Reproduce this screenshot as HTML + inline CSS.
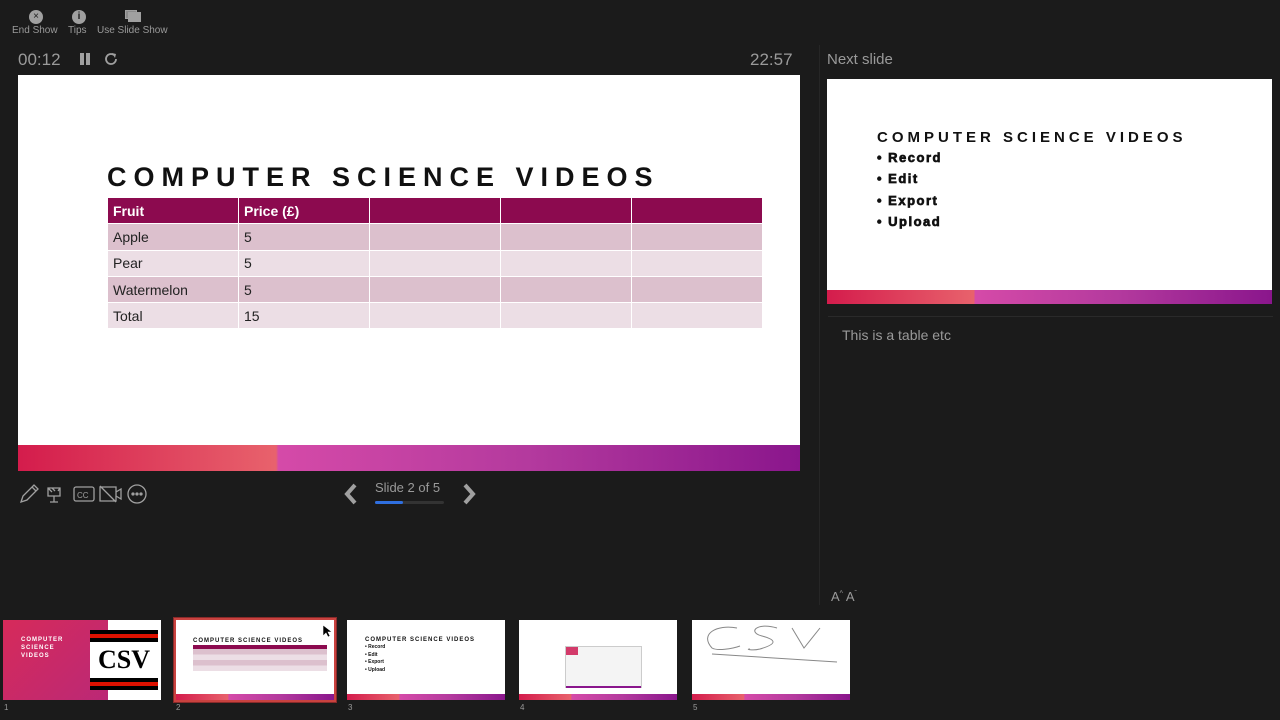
<!DOCTYPE html>
<html><head><meta charset="utf-8"><style>
*{margin:0;padding:0;box-sizing:border-box}
body{width:1280px;height:720px;background:#1b1b1b;font-family:"Liberation Sans",sans-serif;position:relative;overflow:hidden;color:#9a9a9a}
.a{position:absolute}
.band{background:linear-gradient(90deg,#d41c4c 0%,#e8626c 33%,#d54aa8 33.3%,#b43a9e 65%,#8a168c 100%)}
.tl{font-size:10px;color:#9a9a9a;text-align:center}
table{border-collapse:collapse}
td{width:131px;height:26.3px;border:1px solid #fff;font-size:14px;color:#222;padding-left:5px}
.h td{background:#8c0a4f;color:#fff;font-weight:bold}
.o td{background:#dcc0cd}.e td{background:#ecdee5}
.th{position:absolute;top:620px;height:80px;width:158px;background:#fff;overflow:hidden}
.th .b{position:absolute;left:0;right:0;bottom:0;height:6px}
.n{position:absolute;top:703px;font-size:8px;color:#999}
</style></head><body>
<div class="a" style="left:29px;top:10px;width:14px;height:14px;border-radius:50%;background:#a0a0a0;color:#1b1b1b;font-size:10px;text-align:center;line-height:14px">×</div>
<div class="a tl" style="left:12px;top:25px">End Show</div>
<div class="a" style="left:72px;top:10px;width:14px;height:14px;border-radius:50%;background:#a0a0a0;color:#1b1b1b;font-size:10px;font-weight:bold;text-align:center;line-height:14px">i</div>
<div class="a tl" style="left:68px;top:25px">Tips</div>
<div class="a" style="left:125px;top:10px;width:12px;height:9px;border:1px solid #a0a0a0;background:#8a8a8a"></div>
<div class="a" style="left:128px;top:12px;width:13px;height:10px;background:#a0a0a0"></div>
<div class="a tl" style="left:97px;top:25px">Use Slide Show</div>
<div class="a" style="left:18px;top:50px;font-size:17px;color:#9a9a9a">00:12</div>
<div class="a" style="left:80px;top:53px;width:4px;height:12px;background:#a0a0a0"></div>
<div class="a" style="left:86px;top:53px;width:4px;height:12px;background:#a0a0a0"></div>
<svg class="a" style="left:103px;top:51px" width="16" height="16" viewBox="0 0 16 16"><path d="M13 8a5 5 0 1 1-2-4" fill="none" stroke="#a0a0a0" stroke-width="1.8"/><path d="M9 2l4 1-1 4z" fill="#a0a0a0"/></svg>
<div class="a" style="left:750px;top:50px;font-size:17px;color:#9a9a9a">22:57</div>
<div class="a" style="left:18px;top:75px;width:782px;height:396px;background:#fff">
<div class="a" style="left:89px;top:87px;font-size:27px;font-weight:bold;letter-spacing:7px;color:#111">COMPUTER SCIENCE VIDEOS</div>
<table class="a" style="left:89px;top:122px">
<tr class="h"><td>Fruit</td><td>Price (£)</td><td></td><td></td><td></td></tr>
<tr class="o"><td>Apple</td><td>5</td><td></td><td></td><td></td></tr>
<tr class="e"><td>Pear</td><td>5</td><td></td><td></td><td></td></tr>
<tr class="o"><td>Watermelon</td><td>5</td><td></td><td></td><td></td></tr>
<tr class="e"><td>Total</td><td>15</td><td></td><td></td><td></td></tr>
</table>
<div class="a band" style="left:0;bottom:0;width:782px;height:26px"></div>
</div>
<svg class="a" style="left:18px;top:482px" width="135" height="24" viewBox="0 0 135 24" fill="none" stroke="#a0a0a0" stroke-width="1.3">
<path d="M3 20l2-6 11-11 4 4-11 11z M14 5l4 4"/>
<path d="M30 6h12v8h-12z M30 6l4 4 M36 14v6 M32 20h8 M34 6l3 3 M40 9l2-3"/>
<rect x="56" y="5" width="20" height="14" rx="2"/><text x="59" y="16" font-size="8" fill="#a0a0a0" stroke="none" font-family="Liberation Sans">CC</text>
<path d="M82 5h16v14h-16z M98 10l5-3v10l-5-3 M82 4l16 16"/>
<circle cx="119" cy="12" r="9"/><circle cx="115" cy="12" r="1" fill="#a0a0a0"/><circle cx="119" cy="12" r="1" fill="#a0a0a0"/><circle cx="123" cy="12" r="1" fill="#a0a0a0"/>
</svg>
<svg class="a" style="left:343px;top:482px" width="16" height="24"><path d="M12 3l-8 9 8 9" fill="none" stroke="#a0a0a0" stroke-width="4"/></svg>
<div class="a" style="left:375px;top:480px;font-size:13px;color:#9a9a9a">Slide 2 of 5</div>
<div class="a" style="left:375px;top:501px;width:69px;height:3px;background:#333;border-radius:2px"><div style="width:28px;height:3px;background:#2f6fe0;border-radius:2px"></div></div>
<svg class="a" style="left:461px;top:482px" width="16" height="24"><path d="M4 3l8 9-8 9" fill="none" stroke="#a0a0a0" stroke-width="4"/></svg>
<div class="a" style="left:819px;top:45px;width:1px;height:560px;background:#262626"></div>
<div class="a" style="left:827px;top:51px;font-size:15px;color:#9a9a9a">Next slide</div>
<div class="a" style="left:827px;top:79px;width:445px;height:225px;background:#fff">
<div class="a" style="left:50px;top:50px;font-size:15px;font-weight:bold;letter-spacing:4px;color:#111">COMPUTER SCIENCE VIDEOS</div>
<div class="a" style="left:50px;top:68px;font-size:13px;font-weight:900;letter-spacing:1.5px;color:#111;line-height:21.3px;-webkit-text-stroke:0.7px #111">• Record<br>• Edit<br>• Export<br>• Upload</div>
<div class="a band" style="left:0;bottom:0;width:445px;height:14px"></div>
</div>
<div class="a" style="left:828px;top:316px;width:445px;height:1px;background:#2a2a2a"></div>
<div class="a" style="left:842px;top:327px;font-size:14px;color:#9a9a9a">This is a table etc</div>
<div class="a" style="left:831px;top:589px;font-size:13px;color:#9a9a9a">A<sup style="font-size:7px">^</sup> A<sup style="font-size:7px">ˇ</sup></div>
<div class="th" style="left:3px;background:linear-gradient(135deg,#d62a5a,#b3287e)">
<div class="a" style="left:105px;top:0;width:53px;height:80px;background:#fff"></div>
<div class="a" style="left:87px;top:10px;width:68px;height:60px;background:#000"></div>
<div class="a" style="left:87px;top:14px;width:68px;height:4px;background:#d10"></div>
<div class="a" style="left:87px;top:62px;width:68px;height:4px;background:#d10"></div>
<div class="a" style="left:87px;top:22px;width:68px;height:36px;background:#fff;font:900 26px 'Liberation Serif',serif;color:#000;text-align:center;line-height:36px">CSV</div>
<div class="a" style="left:18px;top:16px;font-size:6px;font-weight:bold;color:#fff;letter-spacing:1px;line-height:8px">COMPUTER<br>SCIENCE<br>VIDEOS</div>
</div>
<div class="th" style="left:174px;width:162px;top:618px;height:84px;border:2px solid #c9423f;outline:1px solid #8a2a2a">
<div class="a" style="left:17px;top:18px;font-size:6px;font-weight:bold;letter-spacing:1px;color:#111">COMPUTER SCIENCE VIDEOS</div>
<div class="a" style="left:17px;top:25px;width:134px;height:4px;background:#8c0a4f"></div>
<div class="a" style="left:17px;top:29px;width:134px;height:22px;background:repeating-linear-gradient(#dcc0cd 0 5.5px,#ecdee5 5.5px 11px)"></div>
<div class="b band"></div></div>
<div class="th" style="left:347px">
<div class="a" style="left:18px;top:17px;font-size:6px;font-weight:bold;letter-spacing:1px;color:#111">COMPUTER SCIENCE VIDEOS</div>
<div class="a" style="left:18px;top:24px;font-size:5px;font-weight:900;color:#111;line-height:7.5px">• Record<br>• Edit<br>• Export<br>• Upload</div>
<div class="b band"></div></div>
<div class="th" style="left:519px">
<div class="a" style="left:46px;top:26px;width:77px;height:42px;background:#f4f4f4;border:1px solid #ccc"></div>
<div class="a" style="left:47px;top:27px;width:12px;height:8px;background:#d33a6a"></div>
<div class="a" style="left:47px;top:66px;width:75px;height:2px;background:#8a168c"></div>
<div class="b band"></div></div>
<div class="th" style="left:692px">
<svg class="a" style="left:0;top:0" width="158" height="74" fill="none" stroke="#888" stroke-width="1"><path d="M45 8c-20-4-38 6-25 20 5 3 20 1 28-2 M85 8c-20-6-30 4-15 8s15 8-2 13c-8 2-15 0-10 0 M100 8l12 20 16-20 M20 34l125 8"/></svg>
<div class="b band"></div></div>
<div class="n" style="left:4px">1</div><div class="n" style="left:176px">2</div><div class="n" style="left:348px">3</div><div class="n" style="left:520px">4</div><div class="n" style="left:693px">5</div>
<svg class="a" style="left:322px;top:624px" width="10" height="14"><path d="M1 1v11l3-3 2 4 2-1-2-4h4z" fill="#000" stroke="#fff" stroke-width=".6"/></svg>
</body></html>
